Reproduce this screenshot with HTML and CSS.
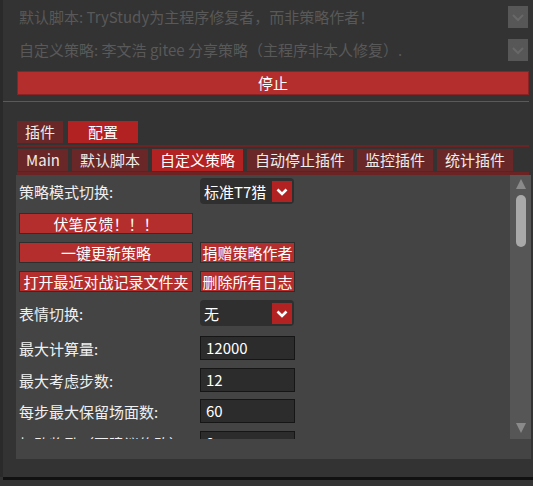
FILE: index.html
```html
<!DOCTYPE html>
<html lang="zh">
<head>
<meta charset="utf-8">
<link rel="stylesheet" href="styles.css">
</head>
<body>
<div class="app">
  <div class="info">
    <span>默认脚本: TryStudy为主程序修复者，而非策略作者！</span>
    <span class="check"><svg width="20" height="22" viewBox="0 0 20 22"><polyline points="5,9 10,14 15,9" fill="none" stroke="#686868" stroke-width="2"/></svg></span>
  </div>
  <div class="info">
    <span>自定义策略: 李文浩 gitee 分享策略（主程序非本人修复）.</span>
    <span class="check"><svg width="20" height="22" viewBox="0 0 20 22"><polyline points="5,9 10,14 15,9" fill="none" stroke="#686868" stroke-width="2"/></svg></span>
  </div>
  <div class="stop">停止</div>
  <div class="divider"></div>

  <div class="tabs1">
    <div class="tab">插件</div>
    <div class="tab active wide">配置</div>
  </div>
  <div class="redline first"></div>
  <div class="tabs2">
    <div class="tab">Main</div>
    <div class="tab">默认脚本</div>
    <div class="tab active">自定义策略</div>
    <div class="tab">自动停止插件</div>
    <div class="tab">监控插件</div>
    <div class="tab">统计插件</div>
  </div>
  <div class="redline second"></div>

  <div class="panel">
    <div class="scroll">
      <div class="row">
        <span class="label">策略模式切换:</span>
        <div class="select"><span>标准T7猎</span><span class="arrow"><svg width="20" height="21" viewBox="0 0 20 21"><polyline points="5.5,8.5 10,13 14.5,8.5" fill="none" stroke="#fff" stroke-width="2.6"/></svg></span></div>
      </div>
      <div class="row first-btn">
        <div class="btn big">伏笔反馈！！！</div>
      </div>
      <div class="row">
        <div class="btn big">一键更新策略</div>
        <div class="btn small">捐赠策略作者</div>
      </div>
      <div class="row">
        <div class="btn big">打开最近对战记录文件夹</div>
        <div class="btn small">删除所有日志</div>
      </div>
      <div class="row">
        <span class="label">表情切换:</span>
        <div class="select"><span>无</span><span class="arrow"><svg width="20" height="21" viewBox="0 0 20 21"><polyline points="5.5,8.5 10,13 14.5,8.5" fill="none" stroke="#fff" stroke-width="2.6"/></svg></span></div>
      </div>
      <div class="row first-in">
        <span class="label">最大计算量:</span>
        <div class="input">12000</div>
      </div>
      <div class="row">
        <span class="label">最大考虑步数:</span>
        <div class="input">12</div>
      </div>
      <div class="row tight">
        <span class="label">每步最大保留场面数:</span>
        <div class="input">60</div>
      </div>
      <div class="row">
        <span class="label">打败奖励（不建议修改）:</span>
        <div class="input">0</div>
      </div>
    </div>
    <div class="scrollbar">
      <div class="up"></div>
      <div class="thumb"></div>
      <div class="down"></div>
    </div>
  </div>
</div>
<div class="bottomline"></div>
</body>
</html>
```

FILE: styles.css
```css
html, body {
  margin: 0;
  padding: 0;
}
body {
  width: 533px;
  height: 486px;
  overflow: hidden;
  background: #333333;
  font-family: "Noto Sans CJK SC", "Noto Sans", sans-serif;
  font-size: 15px;
  color: #f2f2f2;
}
.app {
  height: 477px;
  box-sizing: border-box;
  border-left: 3px solid #2a2a2a;
}
.info {
  height: 33px;
  display: flex;
  align-items: center;
  justify-content: space-between;
  padding: 0 5px 0 16px;
  color: #595959;
  white-space: nowrap;
}
.check {
  width: 20px;
  height: 22px;
  background: #575757;
  display: block;
}
.check svg { display: block; }
.stop {
  margin: 5px 4px 0 14px;
  height: 24px;
  box-sizing: border-box;
  border: 1px solid #8a2424;
  background: #b52e2e;
  color: #fff;
  text-align: center;
  line-height: 22px;
}
.divider {
  margin-top: 6px;
  margin-right: 4px;
  height: 1px;
  background: #5a5a5a;
}
.tabs1 {
  margin-top: 19px;
  padding-left: 14px;
  display: flex;
  gap: 5px;
}
.tabs2 {
  margin-top: 2px;
  padding-left: 15px;
  display: flex;
  gap: 4px;
}
.tab {
  height: 22px;
  line-height: 22px;
  padding: 0 8px;
  background: #6a2727;
  color: #eeeeee;
  white-space: nowrap;
}
.tab.active {
  background: #b22222;
  color: #fff;
}
.tab.wide {
  padding: 0 20px;
}
.redline {
  margin-left: 14px;
  margin-right: 4px;
  background: #6b2323;
}
.redline.first {
  margin-top: 2px;
  height: 2px;
}
.redline.second {
  margin-top: 1px;
  height: 3px;
}
.panel {
  margin: 0 2px 0 13px;
  height: 284px;
  background: #444444;
  display: flex;
  align-items: flex-start;
}
.scroll {
  flex: 1;
  height: 264px;
  overflow: hidden;
  box-sizing: border-box;
  padding: 3px 0 0 3px;
  display: flex;
  flex-direction: column;
  gap: 8px;
}
.row {
  display: flex;
  align-items: center;
  flex-shrink: 0;
}
.row.first-btn { margin-top: 1px; }
.row.first-in { margin-top: 2px; }
.row.tight { margin-top: -1px; }
.label {
  width: 181px;
  flex-shrink: 0;
  white-space: nowrap;
  color: #f0f0f0;
}
.select {
  width: 94px;
  height: 26px;
  box-sizing: border-box;
  background: #2f2f2f;
  border-radius: 4px;
  display: flex;
  align-items: center;
  justify-content: space-between;
  padding: 0 2px 0 4px;
  color: #fff;
}
.arrow {
  width: 20px;
  height: 21px;
  background: #b22222;
  display: block;
}
.arrow svg { display: block; }
.btn {
  height: 21px;
  box-sizing: border-box;
  border: 1px solid #2e2e2e;
  background: #b52e2e;
  color: #fff;
  text-align: center;
  line-height: 19px;
  white-space: nowrap;
}
.btn.big { width: 174px; }
.btn.small {
  width: 95px;
  margin-left: 7px;
}
.input {
  width: 95px;
  height: 24px;
  box-sizing: border-box;
  border: 1px solid #161616;
  background: #2c2c2c;
  padding-left: 5px;
  line-height: 22px;
  color: #fff;
}
.scrollbar {
  width: 21px;
  height: 264px;
  background: #565656;
  display: flex;
  flex-direction: column;
  align-items: center;
}
.up {
  margin-top: 4px;
  width: 0;
  height: 0;
  border-left: 5px solid transparent;
  border-right: 5px solid transparent;
  border-bottom: 10px solid #8a8a8a;
}
.thumb {
  margin-top: 6px;
  width: 10px;
  height: 52px;
  border-radius: 5px;
  background: #a9a9a9;
}
.down {
  margin-top: auto;
  margin-bottom: 6px;
  width: 0;
  height: 0;
  border-left: 5px solid transparent;
  border-right: 5px solid transparent;
  border-top: 10px solid #8a8a8a;
}
.bottomline {
  margin-left: 3px;
  height: 3px;
  background: #111111;
}
```
